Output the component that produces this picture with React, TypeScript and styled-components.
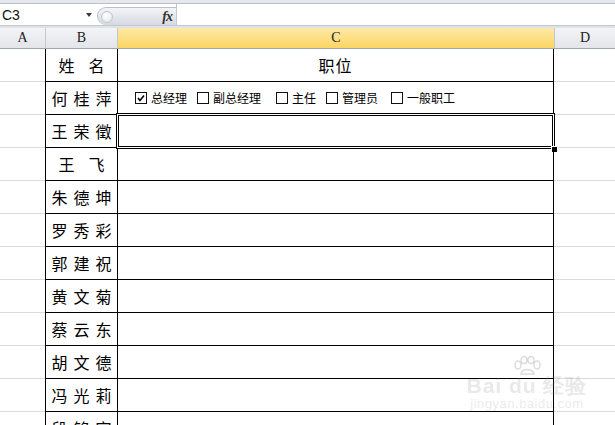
import React from 'react';
import styled, { createGlobalStyle } from 'styled-components';

const GlobalStyle = createGlobalStyle`
  html, body { margin: 0; padding: 0; background: #fff; }
  body { width: 615px; height: 425px; overflow: hidden; }
  #root { width: 615px; height: 425px; }
`;

const Screen = styled.div`
  position: relative;
  width: 615px;
  height: 425px;
  overflow: hidden;
  background: #fff;
  font-family: "Noto Sans CJK SC", "Liberation Sans", sans-serif;
  color: #000;
`;

/* ---------- formula bar ---------- */
const TopStrip = styled.div`
  height: 3px;
  background: #e4e8ee;
  border-bottom: 1px solid #b9bfc8;
`;

const Bar = styled.div`
  display: flex;
  height: 21px;
  background: #fff;
  border-bottom: 1px solid #c3c8cf;
`;

const BarGap = styled.div`
  height: 2px;
  background: #dfe3e8;
`;

const NameBox = styled.div`
  width: 97px;
  display: flex;
  align-items: center;
  padding-left: 2px;
  box-sizing: border-box;
  font-family: "Liberation Sans", Arial, sans-serif;
  font-size: 14px;
  color: #111;
`;

const Arrow = styled.span`
  margin-left: auto;
  margin-right: 5px;
  width: 0;
  height: 0;
  border-left: 3px solid transparent;
  border-right: 3px solid transparent;
  border-top: 4px solid #3c3c3c;
`;

const Pill = styled.div`
  width: 79px;
  margin-top: 3px;
  display: flex;
  align-items: center;
  box-sizing: border-box;
  border: 1px solid #b9bfc7;
  border-right: none;
  border-bottom: none;
  border-radius: 10px 0 0 10px;
  background: linear-gradient(#f3f4f7, #d6dae0);
`;

const Knob = styled.span`
  width: 12px;
  height: 12px;
  margin-left: 3px;
  border-radius: 50%;
  box-sizing: border-box;
  border: 1px solid #c0c5cc;
  background: radial-gradient(circle at 40% 35%, #ffffff, #dfe2e7);
`;

const Fx = styled.span`
  margin-left: auto;
  margin-right: 4px;
  font-family: "Liberation Serif", "Times New Roman", serif;
  font-style: italic;
  font-weight: bold;
  font-size: 14px;
  color: #333;
  letter-spacing: -1px;
`;

const FormulaInput = styled.div`
  flex: 1;
  background: #fff;
  border-left: 1px solid #c3c8cf;
`;

/* ---------- grid ---------- */
const COLS = '45px 72px 437px 61px';

const HeaderRow = styled.div`
  display: grid;
  grid-template-columns: ${COLS};
  height: 20px;
  border-bottom: 1px solid #9ea6b0;
`;

const HeadCell = styled.div<{ $sel?: boolean; $sep?: boolean }>`
  display: flex;
  align-items: center;
  justify-content: center;
  font-family: "Liberation Serif", "DejaVu Serif", serif;
  font-size: 14px;
  color: #222;
  box-sizing: border-box;
  border-left: ${(p) => (p.$sep ? '1px solid #c3c8cf' : 'none')};
  background: ${(p) =>
    p.$sel
      ? 'linear-gradient(#fde9a8, #fcd562)'
      : 'linear-gradient(#f3f4f6, #e2e5e9)'};
`;

const Row = styled.div`
  display: grid;
  grid-template-columns: ${COLS};
  height: 33px;
`;

const PlainCell = styled.div`
  box-sizing: border-box;
  border-bottom: 1px solid #d9dbde;
`;

const NameCell = styled.div<{ $gap: number }>`
  box-sizing: border-box;
  border-left: 1px solid #000;
  border-bottom: 1px solid #000;
  display: flex;
  align-items: center;
  justify-content: center;
  gap: ${(p) => p.$gap}px;
  font-size: 16px;
  line-height: 1;
  padding-bottom: 1px;
`;

const Char = styled.span`
  display: block;
`;

const PosCell = styled.div`
  position: relative;
  box-sizing: border-box;
  border-left: 1px solid #000;
  border-right: 1px solid #000;
  border-bottom: 1px solid #000;
  display: flex;
  align-items: center;
`;

const Title = styled.div`
  width: 100%;
  text-align: center;
  font-size: 16px;
  letter-spacing: 1px;
  line-height: 1;
`;

const Selection = styled.div`
  position: absolute;
  left: -2px;
  right: -2px;
  top: -2px;
  bottom: -2px;
  box-shadow: inset 0 0 0 1px #000, inset 0 0 0 2px #fff, inset 0 0 0 3px #000;
  pointer-events: none;
`;

const FillHandle = styled.div`
  position: absolute;
  right: -4px;
  bottom: -5px;
  width: 5px;
  height: 5px;
  background: #000;
  box-shadow: 0 0 0 1px #fff;
`;

const Options = styled.div`
  display: flex;
  align-items: center;
  height: 100%;
  padding-left: 17px;
`;

const Option = styled.div<{ $w?: number }>`
  display: flex;
  align-items: center;
  width: ${(p) => (p.$w ? `${p.$w}px` : 'auto')};
  font-size: 12px;
  line-height: 1;
  white-space: nowrap;
`;

const Box = styled.span`
  width: 12px;
  height: 12px;
  box-sizing: border-box;
  border: 1px solid #111;
  margin-right: 4px;
  display: flex;
  align-items: center;
  justify-content: center;
  background: #fff;
`;

/* ---------- watermark ---------- */
const Watermark = styled.div`
  position: absolute;
  left: 466px;
  top: 356px;
  width: 122px;
  display: flex;
  flex-direction: column;
  align-items: center;
  color: rgba(140, 140, 140, 0.2);
  pointer-events: none;
`;

const MarkLine = styled.div`
  font-family: "Liberation Sans", Arial, sans-serif;
  font-size: 21px;
  font-weight: bold;
  line-height: 20px;
  letter-spacing: 1px;
  white-space: nowrap;
`;

const MarkUrl = styled.div`
  font-family: "Liberation Sans", Arial, sans-serif;
  font-size: 13px;
  line-height: 15px;
  letter-spacing: 0.5px;
`;

const names = [
  '何桂萍',
  '王荣徵',
  '王飞',
  '朱德坤',
  '罗秀彩',
  '郭建祝',
  '黄文菊',
  '蔡云东',
  '胡文德',
  '冯光莉',
  '段铭宇',
];

const options: { label: string; w?: number; checked?: boolean }[] = [
  { label: '总经理', w: 62, checked: true },
  { label: '副总经理', w: 79 },
  { label: '主任', w: 50 },
  { label: '管理员', w: 65 },
  { label: '一般职工' },
];

const Name = ({ text }: { text: string }) => {
  const chars = Array.from(text);
  return (
    <NameCell $gap={chars.length === 2 ? 14 : 6}>
      {chars.map((c, i) => (
        <Char key={i}>{c}</Char>
      ))}
    </NameCell>
  );
};

const Check = ({ checked }: { checked?: boolean }) => (
  <Box>
    {checked && (
      <svg width="8" height="8" viewBox="0 0 8 8">
        <polyline points="1,4 3,6.5 7,1.5" fill="none" stroke="#000" strokeWidth="1.6" />
      </svg>
    )}
  </Box>
);

export default function App() {
  return (
    <Screen>
      <GlobalStyle />
      <TopStrip />
      <Bar>
        <NameBox>
          C3
          <Arrow />
        </NameBox>
        <Pill>
          <Knob />
          <Fx>fx</Fx>
        </Pill>
        <FormulaInput />
      </Bar>
      <BarGap />
      <HeaderRow>
        <HeadCell>A</HeadCell>
        <HeadCell $sep>B</HeadCell>
        <HeadCell $sep $sel>C</HeadCell>
        <HeadCell $sep>D</HeadCell>
      </HeaderRow>

      <Row>
        <PlainCell />
        <Name text="姓名" />
        <PosCell>
          <Title>职位</Title>
        </PosCell>
        <PlainCell />
      </Row>

      {names.map((n, i) => (
        <Row key={n}>
          <PlainCell />
          <Name text={n} />
          <PosCell>
            {i === 0 && (
              <Options>
                {options.map((o) => (
                  <Option key={o.label} $w={o.w}>
                    <Check checked={o.checked} />
                    {o.label}
                  </Option>
                ))}
              </Options>
            )}
            {i === 1 && (
              <>
                <Selection />
                <FillHandle />
              </>
            )}
          </PosCell>
          <PlainCell />
        </Row>
      ))}

      <Watermark>
        <svg width="30" height="20" viewBox="0 0 30 20">
          <g fill="none" stroke="rgba(140,140,140,0.3)" strokeWidth="1.5">
            <ellipse cx="6" cy="9" rx="3" ry="4" />
            <ellipse cx="12" cy="4" rx="3" ry="3.5" />
            <ellipse cx="19" cy="4" rx="3" ry="3.5" />
            <ellipse cx="25" cy="9" rx="3" ry="4" />
            <path d="M9 18 C10 12 20 12 22 18 Z" />
          </g>
        </svg>
        <MarkLine>Bai du 经验</MarkLine>
        <MarkUrl>jingyan.baidu.com</MarkUrl>
      </Watermark>
    </Screen>
  );
}
